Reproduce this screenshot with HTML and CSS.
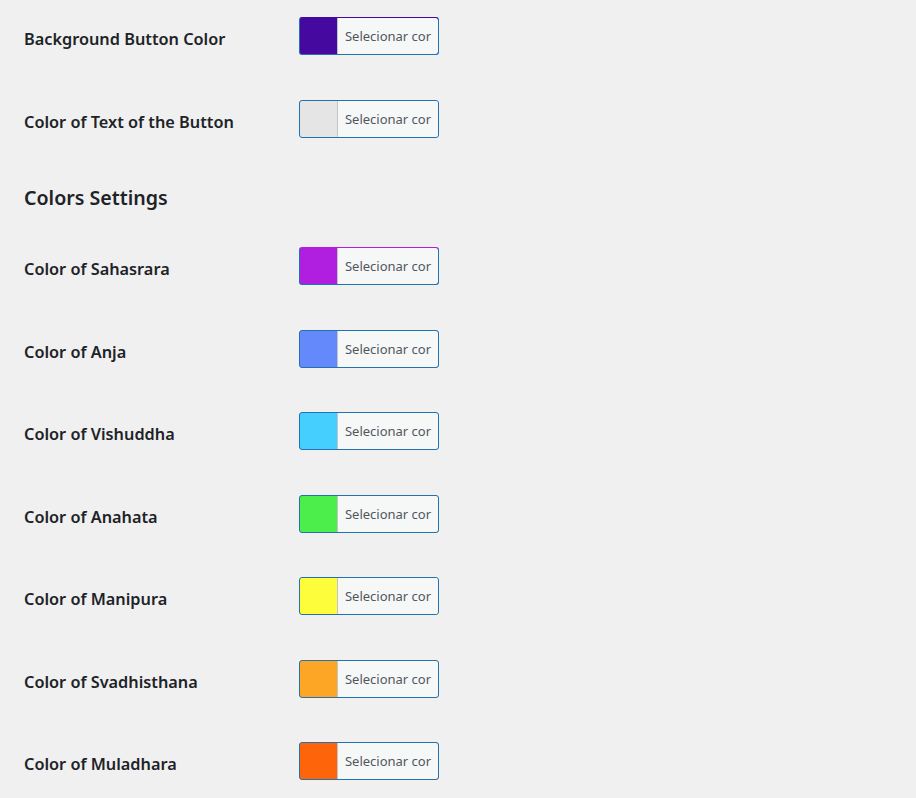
FILE: index.html
```html
<!DOCTYPE html>
<html lang="pt">
<head>
<meta charset="utf-8">
<title>Colors</title>
<link rel="stylesheet" href="styles.css">
</head>
<body>
<div class="page">
  <div class="row">
    <div class="label">Background Button Color</div>
    <button class="picker picker-top" style="background-color:#46099f"><span class="picker-text">Selecionar cor</span></button>
  </div>
  <div class="row">
    <div class="label">Color of Text of the Button</div>
    <button class="picker" style="background-color:#e5e5e5"><span class="picker-text">Selecionar cor</span></button>
  </div>
  <h2 class="section">Colors Settings</h2>
  <div class="row">
    <div class="label">Color of Sahasrara</div>
    <button class="picker picker-top" style="background-color:#b01ee0"><span class="picker-text">Selecionar cor</span></button>
  </div>
  <div class="row">
    <div class="label">Color of Anja</div>
    <button class="picker" style="background-color:#6389fb"><span class="picker-text">Selecionar cor</span></button>
  </div>
  <div class="row">
    <div class="label">Color of Vishuddha</div>
    <button class="picker" style="background-color:#45cffe"><span class="picker-text">Selecionar cor</span></button>
  </div>
  <div class="row">
    <div class="label">Color of Anahata</div>
    <button class="picker" style="background-color:#4bee4b"><span class="picker-text">Selecionar cor</span></button>
  </div>
  <div class="row">
    <div class="label">Color of Manipura</div>
    <button class="picker" style="background-color:#fdfd3b"><span class="picker-text">Selecionar cor</span></button>
  </div>
  <div class="row">
    <div class="label">Color of Svadhisthana</div>
    <button class="picker" style="background-color:#fda524"><span class="picker-text">Selecionar cor</span></button>
  </div>
  <div class="row">
    <div class="label">Color of Muladhara</div>
    <button class="picker" style="background-color:#fe640a"><span class="picker-text">Selecionar cor</span></button>
  </div>
</div>
</body>
</html>
```
FILE: styles.css
```css
html, body {
  margin: 0;
  padding: 0;
  background: #f0f0f1;
}
body {
  font-family: "Noto Sans", "Open Sans", "Liberation Sans", sans-serif;
  color: #1d2327;
}
.page {
  padding-left: 24px;
}
.row {
  display: flex;
  align-items: flex-start;
  height: 82.5px;
  box-sizing: border-box;
  padding-top: 17px;
}
.label {
  width: 275px;
  flex: none;
  font-size: 16.3px;
  font-weight: 600;
  line-height: 22px;
  margin-top: 11px;
}
.section {
  margin: 0;
  height: 65px;
  box-sizing: border-box;
  padding-top: 20px;
  font-size: 19.6px;
  font-weight: 600;
  line-height: 26px;
}
.picker {
  display: block;
  box-sizing: border-box;
  width: 140px;
  height: 38px;
  margin: 0;
  padding: 0 0 0 37px;
  border: 1px solid #2271b1;
  border-radius: 3px;
  cursor: pointer;
  overflow: hidden;
  font-family: inherit;
}
.picker-top {
  border-top-color: transparent;
}
.picker-text {
  display: block;
  height: 100%;
  background: #f6f7f7;
  border-left: 1px solid #c3c4c7;
  border-radius: 0 2px 2px 0;
  color: #50575e;
  font-size: 13px;
  line-height: 36px;
  text-align: center;
  padding: 0 4px;
  white-space: nowrap;
}
```
